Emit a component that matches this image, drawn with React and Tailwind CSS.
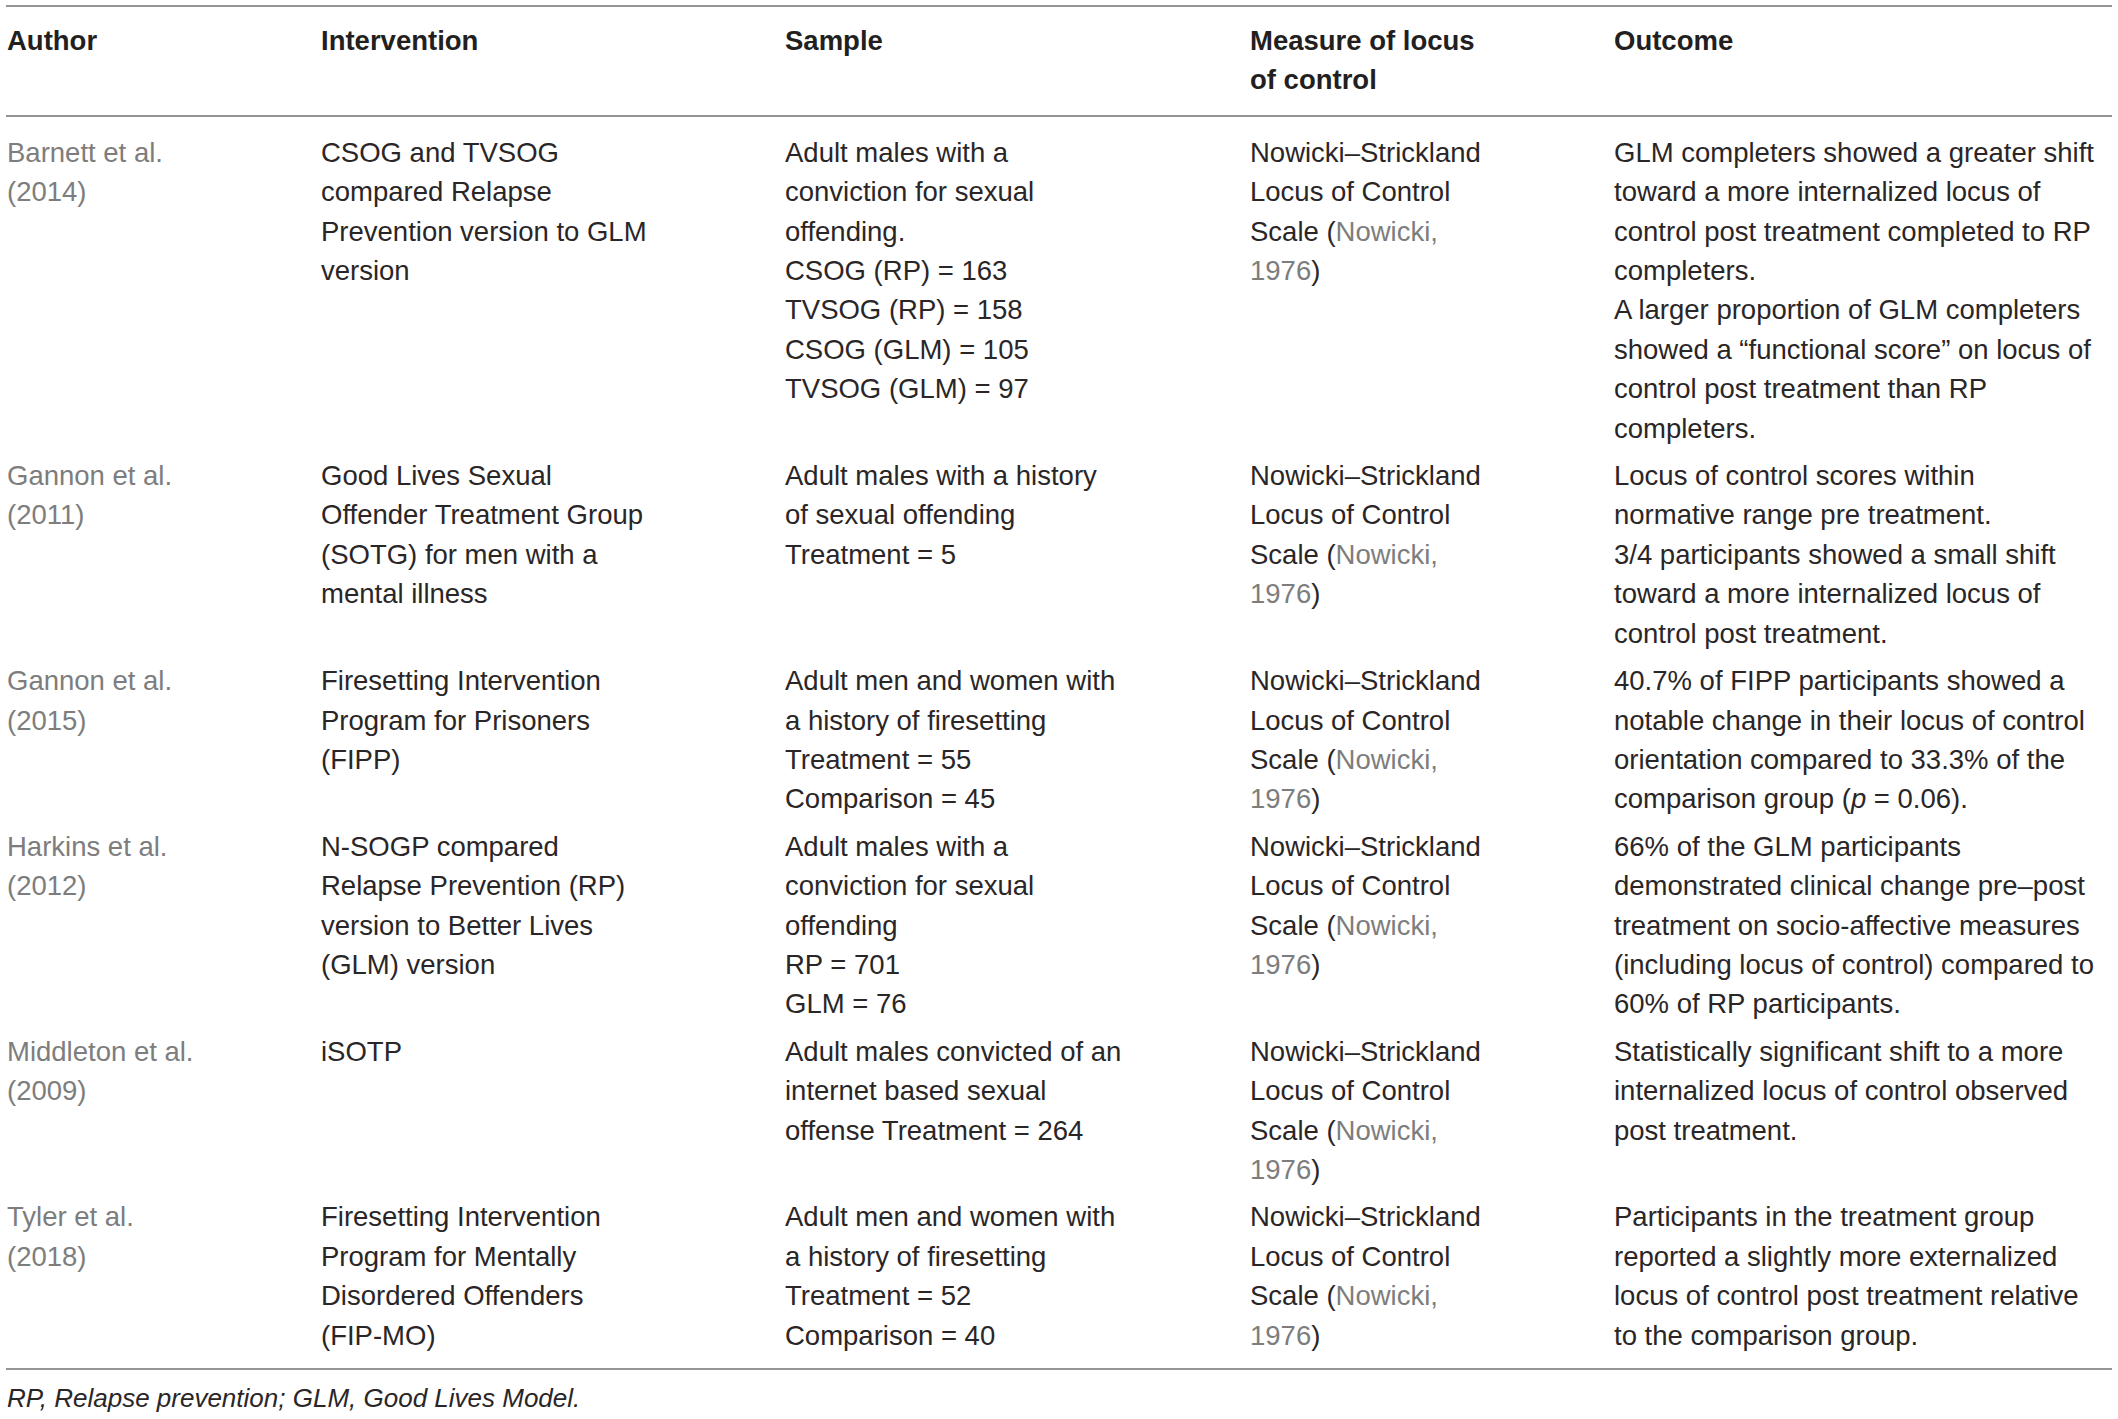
import React from 'react';

const Ref = ({ children }) => <span className="text-[#7d7d7d]">{children}</span>;

const measure = [
  'Nowicki–Strickland',
  'Locus of Control',
  <>Scale (<Ref>Nowicki,</Ref></>,
  <><Ref>1976</Ref>)</>,
];

const rows = [
  {
    author: ['Barnett et al.', '(2014)'],
    intervention: ['CSOG and TVSOG', 'compared Relapse', 'Prevention version to GLM', 'version'],
    sample: [
      'Adult males with a',
      'conviction for sexual',
      'offending.',
      'CSOG (RP) = 163',
      'TVSOG (RP) = 158',
      'CSOG (GLM) = 105',
      'TVSOG (GLM) = 97',
    ],
    outcome: [
      'GLM completers showed a greater shift',
      'toward a more internalized locus of',
      'control post treatment completed to RP',
      'completers.',
      'A larger proportion of GLM completers',
      'showed a “functional score” on locus of',
      'control post treatment than RP',
      'completers.',
    ],
  },
  {
    author: ['Gannon et al.', '(2011)'],
    intervention: ['Good Lives Sexual', 'Offender Treatment Group', '(SOTG) for men with a', 'mental illness'],
    sample: ['Adult males with a history', 'of sexual offending', 'Treatment = 5'],
    outcome: [
      'Locus of control scores within',
      'normative range pre treatment.',
      '3/4 participants showed a small shift',
      'toward a more internalized locus of',
      'control post treatment.',
    ],
  },
  {
    author: ['Gannon et al.', '(2015)'],
    intervention: ['Firesetting Intervention', 'Program for Prisoners', '(FIPP)'],
    sample: ['Adult men and women with', 'a history of firesetting', 'Treatment = 55', 'Comparison = 45'],
    outcome: [
      '40.7% of FIPP participants showed a',
      'notable change in their locus of control',
      'orientation compared to 33.3% of the',
      <>comparison group (<i>p</i> = 0.06).</>,
    ],
  },
  {
    author: ['Harkins et al.', '(2012)'],
    intervention: ['N-SOGP compared', 'Relapse Prevention (RP)', 'version to Better Lives', '(GLM) version'],
    sample: ['Adult males with a', 'conviction for sexual', 'offending', 'RP = 701', 'GLM = 76'],
    outcome: [
      '66% of the GLM participants',
      'demonstrated clinical change pre–post',
      'treatment on socio-affective measures',
      '(including locus of control) compared to',
      '60% of RP participants.',
    ],
  },
  {
    author: ['Middleton et al.', '(2009)'],
    intervention: ['iSOTP'],
    sample: ['Adult males convicted of an', 'internet based sexual', 'offense Treatment = 264'],
    outcome: [
      'Statistically significant shift to a more',
      'internalized locus of control observed',
      'post treatment.',
    ],
  },
  {
    author: ['Tyler et al.', '(2018)'],
    intervention: ['Firesetting Intervention', 'Program for Mentally', 'Disordered Offenders', '(FIP-MO)'],
    sample: ['Adult men and women with', 'a history of firesetting', 'Treatment = 52', 'Comparison = 40'],
    outcome: [
      'Participants in the treatment group',
      'reported a slightly more externalized',
      'locus of control post treatment relative',
      'to the comparison group.',
    ],
  },
];

const Cell = ({ lines, className = '' }) => (
  <div className={`pl-[1px] ${className}`}>
    {lines.map((line, i) => (
      <div key={i} className="whitespace-nowrap">{line}</div>
    ))}
  </div>
);

const cols = 'grid grid-cols-[314px_464px_465px_364px_1fr]';

export default function App() {
  return (
    <div
      className="bg-white min-h-screen text-[#2a2627] text-[27.5px] leading-[39.4px]"
      style={{ fontFamily: '"Liberation Sans", Arial, sans-serif' }}
    >
      <div className="ml-[6px] w-[2106px] pt-[5px]">
        <div className="border-t-2 border-[#959595]">
          <div className={`${cols} pt-[14px] pb-[15px] border-b-2 border-[#959595] font-bold text-[#231f20]`}>
            <Cell lines={['Author']} />
            <Cell lines={['Intervention']} />
            <Cell lines={['Sample']} />
            <Cell lines={['Measure of locus', 'of control']} />
            <Cell lines={['Outcome']} />
          </div>
          <div className="pt-[16px] pb-[13px] border-b-2 border-[#959595] flex flex-col gap-[8px]">
            {rows.map((r, i) => (
              <div key={i} className={cols}>
                <Cell lines={r.author} className="text-[#7d7d7d]" />
                <Cell lines={r.intervention} />
                <Cell lines={r.sample} />
                <Cell lines={measure} />
                <Cell lines={r.outcome} />
              </div>
            ))}
          </div>
        </div>
        <p className="pl-[1px] pt-[10px] italic text-[26px] leading-[36px]">
          RP, Relapse prevention; GLM, Good Lives Model.
        </p>
      </div>
    </div>
  );
}
